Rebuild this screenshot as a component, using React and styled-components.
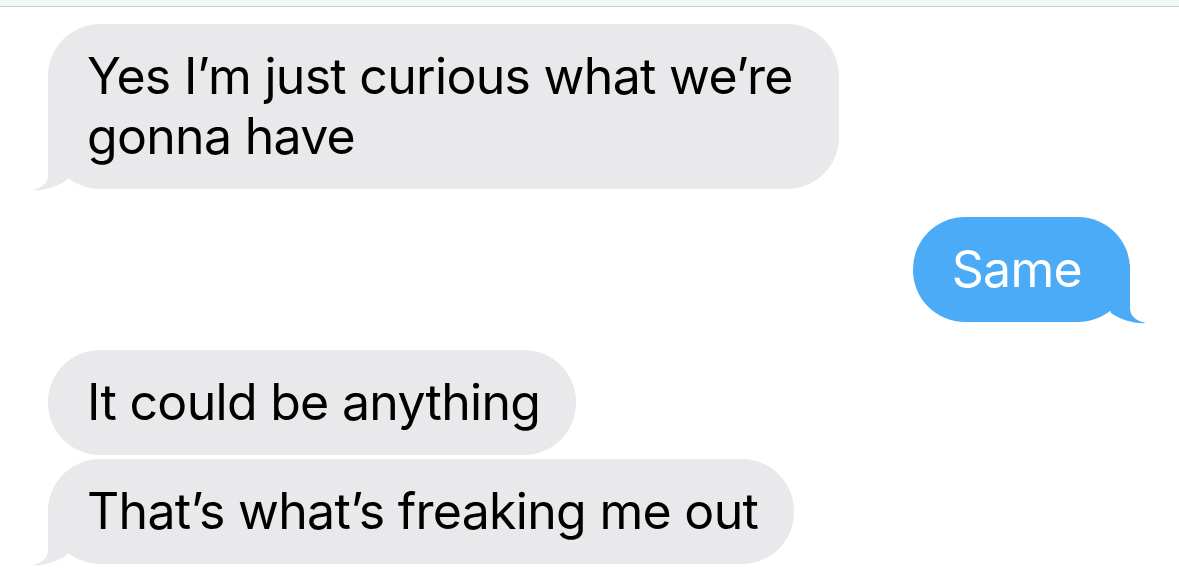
import React from "react";
import styled, { createGlobalStyle, css } from "styled-components";

const Global = createGlobalStyle`
  html, body { margin: 0; padding: 0; background: #ffffff; }
  body { font-family: Inter, "Noto Sans", "Liberation Sans", sans-serif; }
`;

const Page = styled.div`
  width: 1179px;
  height: 573px;
  overflow: hidden;
  background: #ffffff;
  display: flex;
  flex-direction: column;
`;

const TopStrip = styled.div`
  height: 6px;
  background: #eefafa;
  border-bottom: 1px solid #c7cdcd;
  flex: none;
`;

const Thread = styled.div`
  display: flex;
  flex-direction: column;
  padding: 17px 49px 0 48px;
`;

const Row = styled.div`
  display: flex;
  justify-content: ${(p) => (p.$mine ? "flex-end" : "flex-start")};
  margin-top: ${(p) => p.$gap}px;
`;

const Bubble = styled.div`
  position: relative;
  box-sizing: border-box;
  max-width: 791px;
  padding: 22px 36px 23px 39px;
  border-radius: 52px;
  font-size: 50px;
  line-height: 60px;
  letter-spacing: -0.7px;
  color: #000;
  background: #e9e9eb;
  ${(p) =>
    p.$mine &&
    css`
      background: #4babf6;
      color: #fff;
      padding: 22px 48px 23px 39px;
    `}
`;

const TailSvg = styled.svg`
  position: absolute;
  bottom: -2px;
  width: 40px;
  height: 60px;
  ${(p) =>
    p.$mine
      ? css`
          right: -17px;
          transform: scaleX(-1);
        `
      : css`
          left: -17px;
        `}
`;

const Tail = ({ mine, color }) => (
  <TailSvg $mine={mine} viewBox="0 0 40 60">
    <path
      d="M17 0 L17 44 C17 52 11 57 1 59 C12 60 26 56 36 49 L40 38 L40 0 Z"
      fill={color}
    />
  </TailSvg>
);

const messages = [
  { text: "Yes I’m just curious what we’re gonna have", mine: false, tail: true, gap: 0 },
  { text: "Same", mine: true, tail: true, gap: 28 },
  { text: "It could be anything", mine: false, tail: false, gap: 28 },
  { text: "That’s what’s freaking me out", mine: false, tail: true, gap: 4 },
];

export default function App() {
  return (
    <Page>
      <Global />
      <TopStrip />
      <Thread>
        {messages.map((m, i) => (
          <Row key={i} $mine={m.mine} $gap={m.gap}>
            <Bubble $mine={m.mine}>
              {m.text}
              {m.tail && <Tail mine={m.mine} color={m.mine ? "#4babf6" : "#e9e9eb"} />}
            </Bubble>
          </Row>
        ))}
      </Thread>
    </Page>
  );
}
